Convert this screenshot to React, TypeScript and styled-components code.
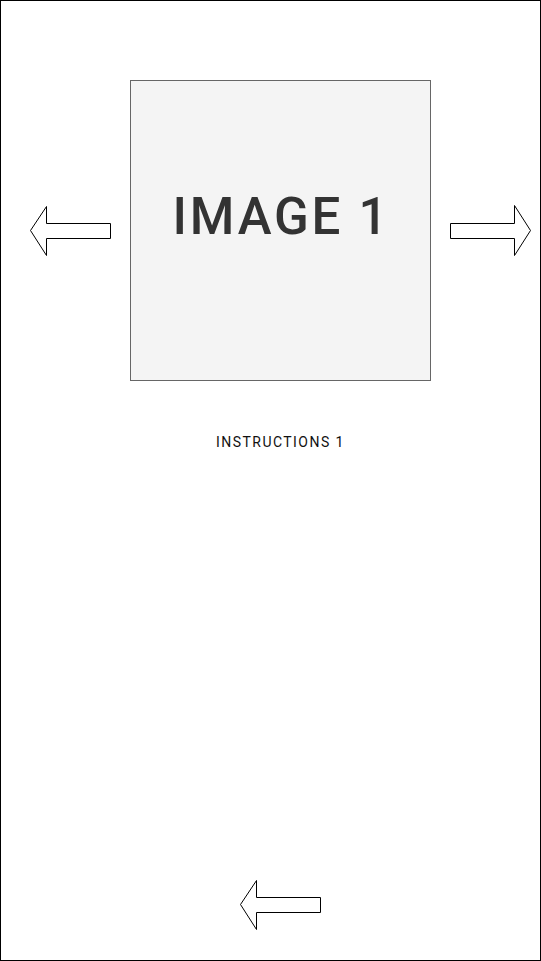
import React from "react";
import styled, { createGlobalStyle } from "styled-components";

const Global = createGlobalStyle`
  html, body { margin: 0; padding: 0; background: #ffffff; }
  * { box-sizing: border-box; }
`;

const Frame = styled.div`
  width: 541px;
  height: 961px;
  border: 1px solid #000000;
  background: #ffffff;
  display: flex;
  flex-direction: column;
  padding: 79px 0 0 29px;
  font-family: Roboto, "Noto Sans", sans-serif;
`;

const Column = styled.div`
  width: 501px;
  flex: 1;
  display: flex;
  flex-direction: column;
  align-items: center;
`;

const CarouselRow = styled.div`
  display: flex;
  align-items: center;
  gap: 19px;
`;

const ImageBox = styled.div`
  width: 301px;
  height: 301px;
  border: 1px solid #666666;
  background: #f4f4f4;
  display: flex;
  align-items: center;
  justify-content: center;
`;

const ImageLabel = styled.span`
  font-family: Roboto, "Noto Sans", sans-serif;
  font-size: 51px;
  font-weight: 500;
  color: #333333;
  letter-spacing: 2.8px;
  line-height: 1;
  margin-top: -28px;
  margin-right: -2px;
`;

const Instructions = styled.div`
  margin-top: 52px;
  font-size: 14px;
  font-weight: 400;
  color: #111111;
  letter-spacing: 1.45px;
  line-height: 18px;
`;

const Spacer = styled.div`
  flex: 1;
`;

const BottomNav = styled.div`
  margin-bottom: 30px;
  display: flex;
  justify-content: center;
`;

const ArrowSvg = styled.svg`
  display: block;
  width: 81px;
  height: 51px;
  flex: none;
`;

type ArrowProps = { dir: "left" | "right" };

const Arrow: React.FC<ArrowProps> = ({ dir }) => {
  const left = "M0.5 25.5 L16.5 1.5 L16.5 18.5 L80.5 18.5 L80.5 33.5 L16.5 33.5 L16.5 50.5 Z";
  const right = "M80.5 25.5 L64.5 0.5 L64.5 18.5 L0.5 18.5 L0.5 33.5 L64.5 33.5 L64.5 50.5 Z";
  return (
    <ArrowSvg viewBox="0 0 81 51">
      <path d={dir === "left" ? left : right} fill="#ffffff" stroke="#000000" strokeWidth={1} />
    </ArrowSvg>
  );
};

export default function App() {
  return (
    <>
      <Global />
      <Frame>
        <Column>
          <CarouselRow>
            <Arrow dir="left" />
            <ImageBox>
              <ImageLabel>IMAGE 1</ImageLabel>
            </ImageBox>
            <Arrow dir="right" />
          </CarouselRow>
          <Instructions>INSTRUCTIONS 1</Instructions>
          <Spacer />
          <BottomNav>
            <Arrow dir="left" />
          </BottomNav>
        </Column>
      </Frame>
    </>
  );
}
